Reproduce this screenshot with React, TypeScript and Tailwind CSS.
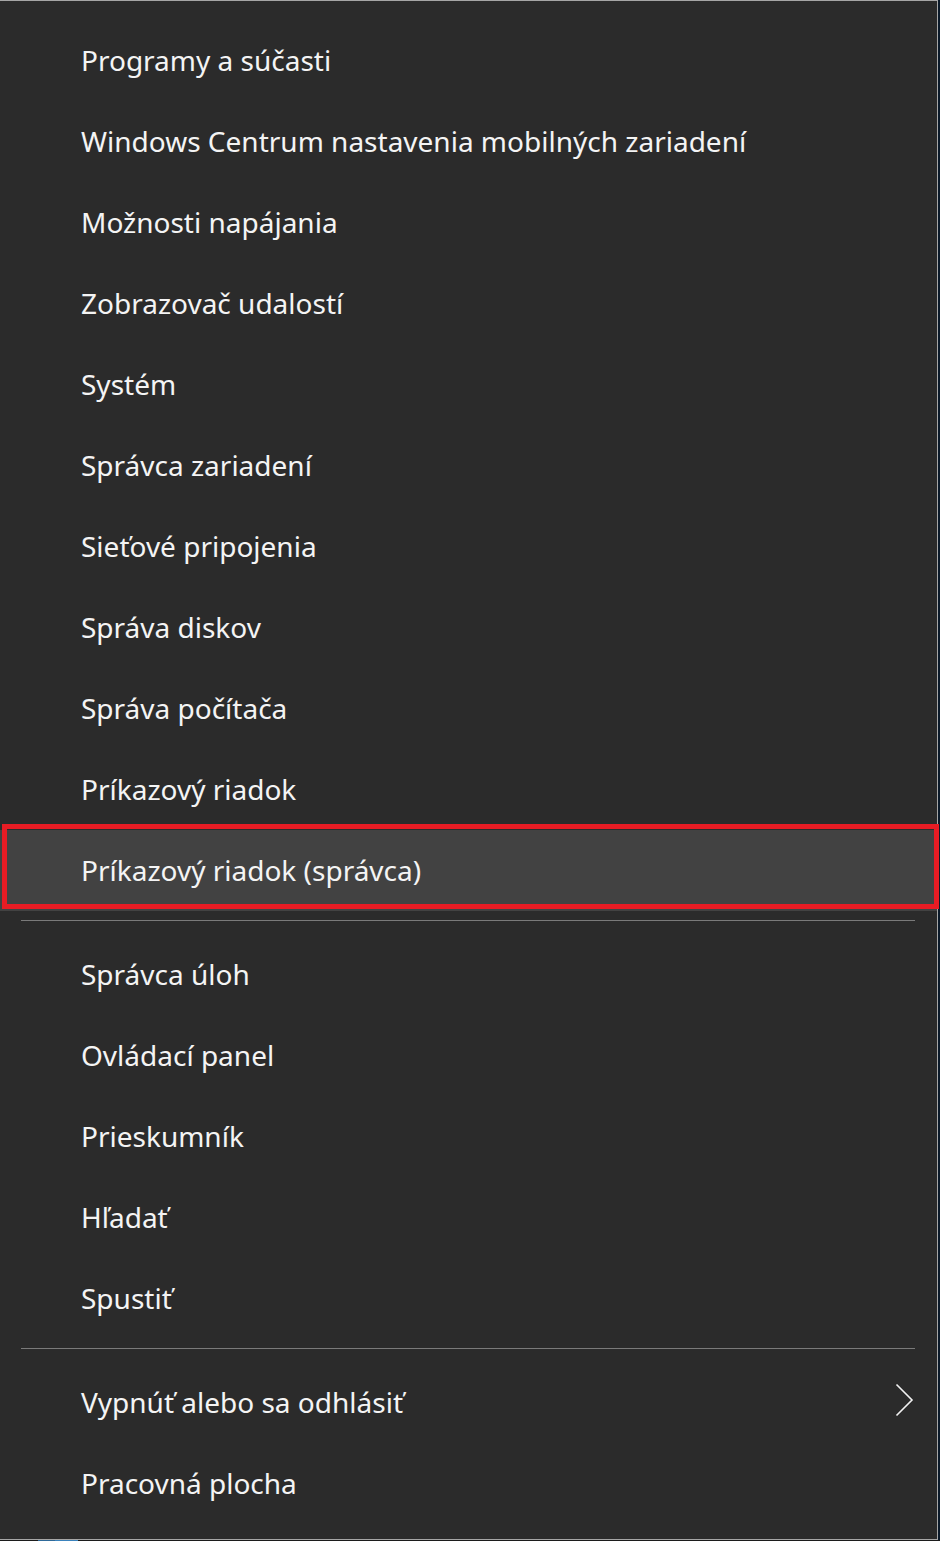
import React from "react"

const groupA = [
	"Programy a súčasti",
	"Windows Centrum nastavenia mobilných zariadení",
	"Možnosti napájania",
	"Zobrazovač udalostí",
	"Systém",
	"Správca zariadení",
	"Sieťové pripojenia",
	"Správa diskov",
	"Správa počítača",
	"Príkazový riadok",
	"Príkazový riadok (správca)",
]

const groupB = ["Správca úloh", "Ovládací panel", "Prieskumník", "Hľadať", "Spustiť"]

const Item: React.FC<{ label: string; active?: boolean; arrow?: boolean }> = ({
	label,
	active,
	arrow,
}) => (
	<div
		className={`relative flex h-[81px] items-center pl-[81px] text-[28px] text-[#f4f4f4] ${
			active ? "bg-[#424242]" : ""
		}`}
	>
		<span className="-translate-y-px leading-none">{label}</span>
		{arrow && (
			<svg
				className="absolute right-[23px] top-[21px]"
				width="19"
				height="34"
				viewBox="0 0 19 34"
				fill="none"
			>
				<path d="M1.5 1.5 L17 17 L1.5 32.5" stroke="#f2f2f2" strokeWidth="1.6" />
			</svg>
		)}
	</div>
)

const Separator = () => (
	<div className="pt-[9px] pb-[13px] pl-[21px] pr-[22px]">
		<div className="h-px bg-[#7a7a7a]" />
	</div>
)

export default function App() {
	return (
		<div
			className="relative h-[1541px] w-[940px] overflow-hidden bg-[#0b1a2a]"
			style={{ fontFamily: '"Noto Sans", "Open Sans", sans-serif' }}
		>
			<div className="h-[1540px] w-[938px] border-t border-r border-b border-[#a6a6a6] bg-[#2b2b2b] pt-[19px]">
				{groupA.map((l, i) => (
					<Item key={l} label={l} active={i === 10} />
				))}
				<Separator />
				{groupB.map((l) => (
					<Item key={l} label={l} />
				))}
				<Separator />
				<Item label="Vypnúť alebo sa odhlásiť" arrow />
				<Item label="Pracovná plocha" />
			</div>
			<div className="flex h-px">
				<div className="w-[38px] bg-[#1c1c1c]" />
				<div className="w-[17px] bg-[#2f6a9a]" />
				<div className="w-[23px] bg-[#3b83bd]" />
				<div className="flex-1 bg-[#1c1c1c]" />
			</div>
			<div className="pointer-events-none absolute left-[2px] top-[824px] h-[85px] w-[937px] border-[5px] border-[#e81c24]" />
		</div>
	)
}
